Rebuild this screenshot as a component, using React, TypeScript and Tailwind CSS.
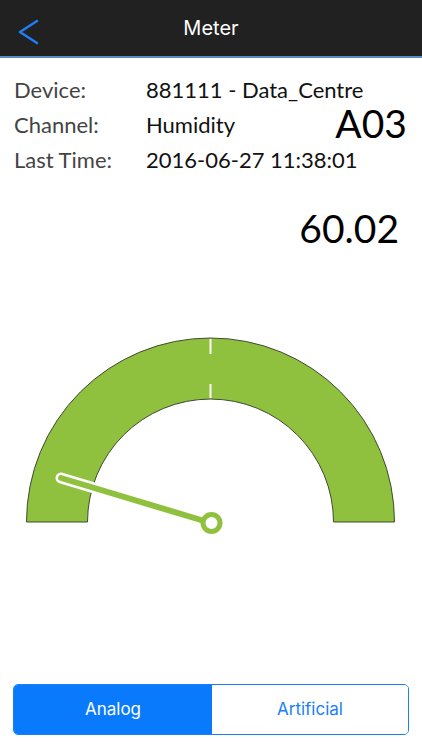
import React from "react";

export default function App() {
  const font = { fontFamily: "Lato, 'Noto Sans', sans-serif" };
  return (
    <div className="w-[422px] h-[750px] bg-white flex flex-col overflow-hidden" style={font}>
      <div className="h-[58px] bg-[#212121] border-b-2 border-[#5a8ccc] relative flex items-center justify-center shrink-0">
        <svg className="absolute left-0 top-0" width="60" height="56" viewBox="0 0 60 56">
          <polyline points="37,21 20,32 37,43" fill="none" stroke="#1f7ef2" strokeWidth="2.6" strokeLinecap="round" strokeLinejoin="round" />
        </svg>
        <span className="text-white text-[20px] leading-none" style={{ fontFamily: "Inter, Roboto, sans-serif" }}>Meter</span>
      </div>

      <div className="pt-[14px] pl-[14px] pr-[15px] text-[22px] leading-[35px]">
        <div className="flex">
          <span className="w-[132px] text-[#444]">Device:</span>
          <span className="text-[#111]">881111 - Data_Centre</span>
        </div>
        <div className="flex items-center">
          <span className="w-[132px] text-[#444]">Channel:</span>
          <span className="text-[#111] flex-1">Humidity</span>
          <span className="text-[39px] leading-[35px] text-black -mt-[3px]">A03</span>
        </div>
        <div className="flex">
          <span className="w-[132px] text-[#444]">Last Time:</span>
          <span className="text-[#111]">2016-06-27 11:38:01</span>
        </div>
      </div>

      <div className="flex justify-end pr-[23px] mt-[31px]">
        <span className="text-[39px] leading-[40px] text-black">60.02</span>
      </div>

      <div className="mt-[88px]">
        <svg width="422" height="200" viewBox="0 0 422 200">
          <path
            d="M 26.5 186 A 184 184 0 0 1 394.5 186 L 333.5 186 A 123 123 0 0 0 87.5 186 Z"
            fill="#8fc13f"
            stroke="#3f4a33"
            strokeWidth="1"
          />
          <line x1="210.5" y1="3" x2="210.5" y2="18" stroke="#fff" strokeWidth="2" />
          <line x1="210.5" y1="48" x2="210.5" y2="62" stroke="#fff" strokeWidth="2" />
          <line x1="211" y1="187" x2="61" y2="142" stroke="#fff" strokeWidth="11" strokeLinecap="round" />
          <line x1="211" y1="187" x2="61" y2="142" stroke="#8fc13f" strokeWidth="6" strokeLinecap="round" />
          <circle cx="211.5" cy="187" r="8.5" fill="#fff" stroke="#8fc13f" strokeWidth="5" />
        </svg>
      </div>

      <div className="mt-auto mb-[15px] mx-[13px] h-[51px] flex rounded-[5px] border border-[#1a7ff5] overflow-hidden text-[17px]" style={{ fontFamily: "Inter, Roboto, sans-serif" }}>
        <div className="w-[198px] bg-[#0a7afc] text-white flex items-center justify-center">Analog</div>
        <div className="flex-1 bg-white text-[#1a7ff5] flex items-center justify-center">Artificial</div>
      </div>
    </div>
  );
}
